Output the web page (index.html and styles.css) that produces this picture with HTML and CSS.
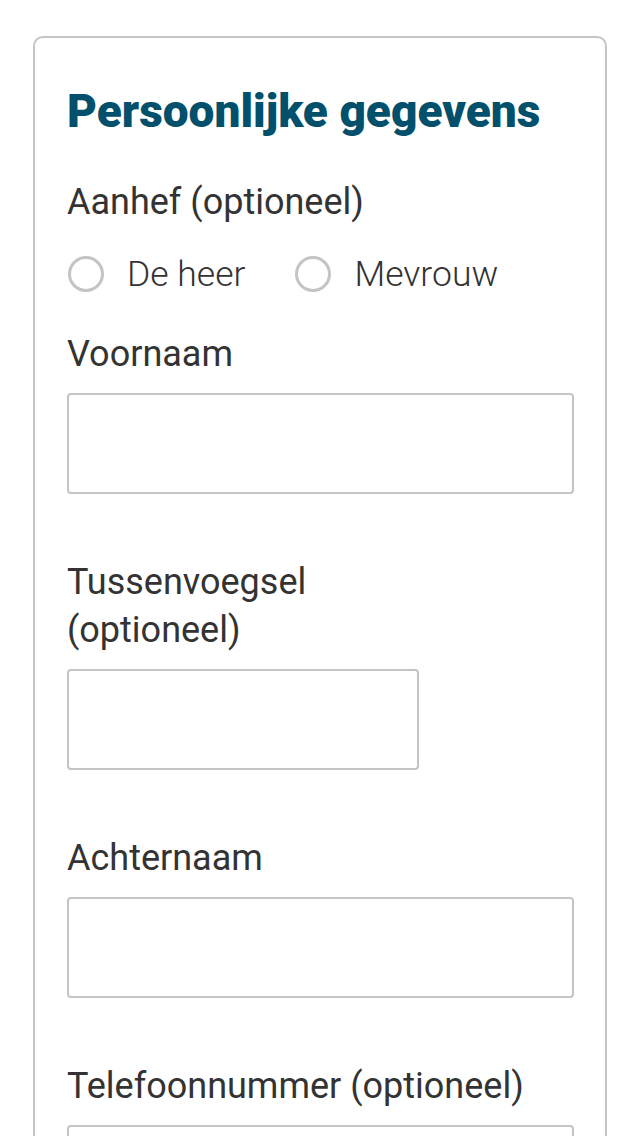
FILE: index.html
```html
<!DOCTYPE html>
<html lang="nl">
<head>
<meta charset="utf-8">
<title>Persoonlijke gegevens</title>
<link rel="stylesheet" href="styles.css">
</head>
<body>
<form class="card">
  <h2 class="title">Persoonlijke gegevens</h2>
  <fieldset class="group">
    <legend class="label">Aanhef (optioneel)</legend>
    <div class="radios">
      <label class="radio"><input type="radio" name="aanhef" class="radio-input"><span class="radio-mark"></span><span class="radio-text">De heer</span></label>
      <label class="radio"><input type="radio" name="aanhef" class="radio-input"><span class="radio-mark"></span><span class="radio-text">Mevrouw</span></label>
    </div>
  </fieldset>
  <div class="field">
    <label class="label" for="voornaam">Voornaam</label>
    <input class="input" id="voornaam" type="text">
  </div>
  <div class="field field-narrow">
    <label class="label" for="tussen">Tussenvoegsel (optioneel)</label>
    <input class="input" id="tussen" type="text">
  </div>
  <div class="field">
    <label class="label" for="achternaam">Achternaam</label>
    <input class="input" id="achternaam" type="text">
  </div>
  <div class="field">
    <label class="label" for="tel">Telefoonnummer (optioneel)</label>
    <input class="input" id="tel" type="tel">
  </div>
</form>
</body>
</html>
```
FILE: styles.css
```css
html, body {
  margin: 0;
  padding: 0;
  background: #ffffff;
}
body {
  font-family: Roboto, "Liberation Sans", Arial, sans-serif;
  color: #333333;
  padding: 36px 33px 0 33px;
}
.card {
  box-sizing: border-box;
  width: 574px;
  border: 2px solid #c4c4c4;
  border-radius: 10px;
  padding: 45px 31px 40px 32px;
  display: flex;
  flex-direction: column;
}
.title {
  margin: 0 0 39px 0;
  font-family: Roboto, "Liberation Sans", sans-serif;
  font-weight: 900;
  font-size: 46px;
  line-height: 56px;
  color: #02506b;
  letter-spacing: 0;
}
.group {
  border: 0;
  margin: 0 0 32px 0;
  padding: 0;
  min-width: 0;
}
.label {
  display: block;
  padding: 0;
  font-size: 36px;
  line-height: 48px;
  font-weight: 400;
  color: #333333;
  margin: 0 0 15px 0;
}
.group .label {
  margin-bottom: 24px;
}
.radios {
  display: flex;
  align-items: center;
  gap: 49px;
  height: 48px;
}
.radio {
  display: flex;
  align-items: center;
  gap: 23px;
}
.radio-input {
  position: absolute;
  opacity: 0;
  width: 0;
  height: 0;
  margin: 0;
}
.radio-mark {
  box-sizing: border-box;
  width: 36px;
  height: 36px;
  border: 3.5px solid #c4c4c4;
  border-radius: 50%;
  margin-left: 1px;
}
.radio-text {
  font-size: 35.5px;
  line-height: 48px;
  font-weight: 300;
  color: #333333;
}
.field {
  display: flex;
  flex-direction: column;
  margin-bottom: 64px;
}
.field-narrow {
  width: 352px;
}
.input {
  box-sizing: border-box;
  height: 101px;
  width: 100%;
  margin: 0;
  border: 2px solid #c4c4c4;
  border-radius: 4px;
  background: #ffffff;
  font: inherit;
}
```
